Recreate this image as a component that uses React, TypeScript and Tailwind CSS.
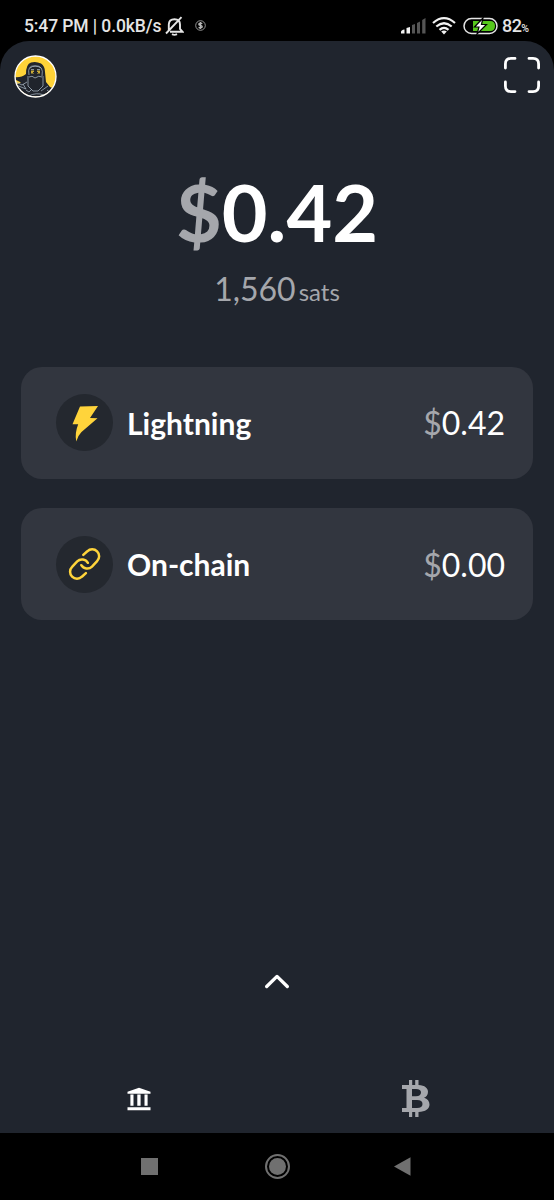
import type { ReactNode } from 'react';

function Avatar() {
  return (
    <svg className="h-[43px] w-[43px]" viewBox="0 0 43 43" fill="none">
      <defs>
        <clipPath id="avatar">
          <circle cx="21.5" cy="21.5" r="20" />
        </clipPath>
      </defs>
      <circle cx="21.5" cy="21.5" r="20.5" fill="#ffd338" />
      <g clipPath="url(#avatar)">
        <path d="M0 22Q7 23 12 19Q12 9 17 7.5Q22 6 27 8.5Q31 11 31 17L32 27L36 32L43 35V43H0V30L7 27.5L0 24Z" fill="#20242c" />
        <g stroke="#a9b8c6" strokeWidth="0.75">
          <path d="M15 20Q13 10 21 11Q30 10 28 21M16 13Q21 9 27 13M14 21L14 31L19 36L24 36L29 31L29 21" />
          <path d="M15 22Q18 20 21 23Q25 20 28 22M17 14.5L20 14.5M23 14.5L26 14.5" />
          <path d="M2 27L8 30L13 27M2 30L12 34L9 29M12 35L15 37L18 34M27 36L34 31M15 41Q22 37 30 40M33 35L38 39" />
        </g>
        <path d="M17 15.5h3v3h-3zM23 15.5h3v3h-3z" fill="#c8a937" />
        <path d="M19 17h1v1h-1zM23 17h1v1h-1z" fill="#20242c" />
      </g>
      <circle cx="21.5" cy="21.5" r="20.5" stroke="#fff" strokeWidth="1.3" />
    </svg>
  );
}

function StatusBar() {
  return (
    <div className="flex h-[41px] items-center justify-between pt-[10px] pr-[25px] pl-6 font-[Roboto,sans-serif] font-medium text-[#e5e5e5]">
      <div className="flex items-center">
        <span className="w-[138px] pt-0.5 text-[17.5px] tracking-[-0.1px] whitespace-nowrap">5:47 PM | 0.0kB/s</span>
        <svg className="ml-[3px] h-5 w-[19px]" viewBox="0 0 19 20" fill="none" stroke="#e5e5e5" strokeWidth="1.9">
          <path d="M3.8 15V8.5Q4 3.2 9.5 3.2Q15 3.2 15 8.5V13L17.5 15.8H5M1 17.5L16.5 1.2" />
          <path d="M7 18.2Q9.5 19.6 12 18.2" />
        </svg>
        <svg className="ml-[11px] h-[11px] w-[11px]" viewBox="0 0 11 11" fill="none" stroke="#b8b8b8">
          <circle cx="5.5" cy="5.5" r="4.8" strokeWidth="0.8" />
          <path d="M7.3 3.6Q5.5 2.6 4.1 3.6Q3.3 5 5.5 5.4Q7.7 6 7 7.3Q5.5 8.4 3.6 7.3M5.5 2V9" strokeWidth="1.4" />
        </svg>
      </div>
      <div className="flex items-center">
        <svg className="h-4 w-[25px]" viewBox="0 0 25 16">
          <path d="M0 15.5V14Q0 12 3.5 11.5V15.5ZM5.5 15.5V10L9 9V15.5Z" fill="#f2f2f2" />
          <path d="M11 15.5V7L14 6V15.5ZM16 15.5V5L19 3.5V15.5ZM21.2 15.5V2L24.5 0V15.5Z" fill="#555" />
        </svg>
        <svg className="ml-1.5 h-[18px] w-6" viewBox="0 0 24 18" fill="none" stroke="#f2f2f2" strokeWidth="2.2">
          <path d="M1 6Q12 -3.6 23 6M4.3 9.5Q12 3 19.7 9.5M7.5 12.9Q12 9 16.5 12.9" />
          <path d="M9.2 14.5Q12 12.6 14.8 14.5L12 17.5Z" fill="#f2f2f2" stroke="none" />
        </svg>
        <svg className="ml-[7px] h-[18px] w-[35px]" viewBox="0 0 35 18">
          <rect x="1" y="1.5" width="33" height="15" rx="7.5" fill="none" stroke="#e5e5e5" strokeWidth="1.5" />
          <path d="M10 4H27Q32 4 32 9Q32 14 27 14H10Z" fill="#56c71c" />
          <path d="M20 1L11.5 10H16L14 17L23.5 7.5H18.5Z" fill="#fff" stroke="#000" strokeWidth="1.2" />
        </svg>
        <span className="ml-1 text-[18px] tracking-[-0.6px]">82</span>
        <span className="pt-1.5 text-[10.5px]">%</span>
      </div>
    </div>
  );
}

function AccountCard({ icon, title, amount }: { icon: ReactNode; title: string; amount: string }) {
  return (
    <div className="flex h-[112.6px] items-center rounded-[21px] bg-[#32363f] pl-[35px] pr-[28px]">
      <div className="h-[57px] w-[57px] rounded-full bg-[#24282f]">{icon}</div>
      <span className="ml-3.5 text-[30px] leading-9 font-bold text-white">{title}</span>
      <span className="ml-auto pt-px text-[32px] text-white">
        <span className="text-[#a5a7ac]">$</span>
        {amount}
      </span>
    </div>
  );
}

export default function App() {
  return (
    <div className="flex h-[1200px] w-[554px] flex-col bg-black font-[Lato,sans-serif]">
      <StatusBar />
      <main className="flex h-[1092px] flex-col rounded-t-[29px] bg-[#20252e]">
        <header className="flex h-[70px] items-center justify-between px-3.5">
          <Avatar />
          <svg className="mb-[3px] h-9 w-9" viewBox="0 0 36 36" fill="none" stroke="#fff" strokeWidth="2.8" strokeLinecap="round">
            <path d="M1.4 11V7Q1.4 1.4 7 1.4H11M25 1.4H29Q34.6 1.4 34.6 7V11M34.6 25V29Q34.6 34.6 29 34.6H25M11 34.6H7Q1.4 34.6 1.4 29V25" />
          </svg>
        </header>

        <div className="flex h-[255.6px] flex-col items-center pt-[53px]">
          <div className="text-[79px] leading-[96px] font-bold text-white">
            <span className="text-[#a5a7ac]">$</span>0.42
          </div>
          <div className="mt-[9px] flex items-baseline gap-[3px] leading-10 text-[#a5a7ac]">
            <span className="text-[32px]">1,560</span>
            <span className="text-[24px]">sats</span>
          </div>
        </div>

        <div className="flex flex-col gap-[28.6px] px-[21px]">
          <AccountCard
            title="Lightning"
            amount="0.42"
            icon={
              <svg viewBox="0 0 57 57" fill="#ffd43b">
                <path d="M24 12.5L42 12L34 24L41.5 24.2L25.5 38Q21.5 42 20.3 47.5C19 41 20 36 22.2 30.2H16.5Z" />
              </svg>
            }
          />
          <AccountCard
            title="On-chain"
            amount="0.00"
            icon={
              <svg viewBox="0 0 57 57" fill="none" stroke="#ffd43b" strokeWidth="2.5" strokeLinecap="round">
                <path d="M27.3 18.9L31.3 15.3A6.9 6.9 0 0 1 41.1 25.1L36 30.7A6.9 6.9 0 0 1 25.3 29.2" />
                <path d="M29.9 37.1L25.9 40.7A6.9 6.9 0 0 1 16.1 30.9L21.2 25.3A6.9 6.9 0 0 1 31.9 26.8" />
              </svg>
            }
          />
        </div>

        <svg className="mx-auto mt-auto mb-[69px] h-4 w-6" viewBox="0 0 24 16" fill="none" stroke="#fff" strokeWidth="3.3" strokeLinecap="round" strokeLinejoin="round">
          <path d="M1.7 13.5L12 3.4L22.3 13.5" />
        </svg>

        <div className="grid h-[75px] grid-cols-2 place-items-center">
          <svg className="mt-1.5 h-6 w-6" viewBox="0 0 24 24" fill="#fff">
            <path d="M.5 4.8L12 .7L23.5 4.8V6.7H.5ZM3.4 7.5H6.5V18.8H3.4ZM10.3 7.5H13.6V18.8H10.3ZM17.5 7.5H20.6V18.8H17.5ZM.5 20.2H23.5V23.3H.5Z" />
          </svg>
          <svg className="mt-1.5 h-[37px] w-7" viewBox="0 0 28 37" fill="#a5a7ac">
            <path fillRule="evenodd" d="M7 0H10.2V5H13.2V0H16.5V5C23 5.4 26 8.2 26 11.7C26 15 24.2 16.8 22 17.8C25.5 19 27.5 21.2 27.5 24.5C27.5 29 23.5 31.7 16.5 32V37H13.2V32H10.2V37H7V32H0V28H4.5V9H0V5H7ZM10 9V16.2H14Q19 16.2 19 12.5Q19 9 14 9ZM10 20V28H15Q20.5 28 20.5 24Q20.5 20 15 20Z" />
          </svg>
        </div>
      </main>

      <nav className="flex h-[67px] items-center justify-between pl-[141px] pr-[143px]">
        <div className="h-[17px] w-[17px] bg-[#707070]" />
        <div className="ml-[2px] flex h-[25px] w-[25px] items-center justify-center rounded-full border-2 border-[#707070]">
          <div className="h-[17px] w-[17px] rounded-full bg-[#707070]" />
        </div>
        <svg className="h-[19px] w-[17px]" viewBox="0 0 17 19" fill="#707070">
          <path d="M0 9.5L16.5 .2V18.8Z" />
        </svg>
      </nav>
    </div>
  );
}
